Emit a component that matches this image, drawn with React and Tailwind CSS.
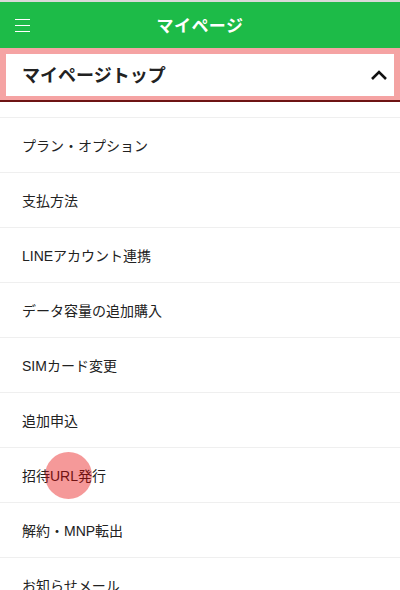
import { useState } from 'react';

const items = [
  'プラン・オプション',
  '支払方法',
  'LINEアカウント連携',
  'データ容量の追加購入',
  'SIMカード変更',
  '追加申込',
  '招待URL発行',
  '解約・MNP転出',
  'お知らせメール',
];

export default function App() {
  const [open, setOpen] = useState(true);

  return (
    <div
      className="relative w-[400px] h-[590px] overflow-hidden bg-white text-[#222]"
      style={{ fontFamily: '"Liberation Sans", "Noto Sans CJK JP", sans-serif' }}
    >
      <div className="border-t-2 border-[#d9d9d9] bg-[#1dbb48] h-[48px] flex items-center relative">
        <button className="absolute left-[15px] top-[17px] w-[15px] flex flex-col gap-[5px]">
          <span className="block h-px bg-white" />
          <span className="block h-px bg-white" />
          <span className="block h-px bg-white" />
        </button>
        <h1 className="w-full text-center text-white font-bold text-[17px] tracking-wide pt-[3px]">マイページ</h1>
      </div>

      <div className="bg-[#f5a3a3] px-[6px] pt-[6px] pb-[4px] border-b-2 border-[#6e1414]">
        <button
          onClick={() => setOpen(!open)}
          className="w-full h-[42px] bg-white flex items-center justify-between pl-[16px] pr-[6px]"
        >
          <span className="font-bold text-[18px] pt-[3px]">マイページトップ</span>
          <svg width="18" height="12" viewBox="0 0 18 12" fill="none">
            <path d="M2 10 L9 3 L16 10" stroke="#111" strokeWidth="2.6" />
          </svg>
        </button>
      </div>

      <div className="h-[16px] border-b border-[#efefef]" />
      <ul>
        {items.map((t) => (
          <li key={t} className="h-[55px] border-b border-[#efefef] flex items-center pl-[22px] pt-[3px] text-[14px]">
            {t}
          </li>
        ))}
      </ul>

      <div className="absolute left-[45px] top-[452px] w-[47px] h-[47px] rounded-full bg-[#e60000]/40" />
    </div>
  );
}
